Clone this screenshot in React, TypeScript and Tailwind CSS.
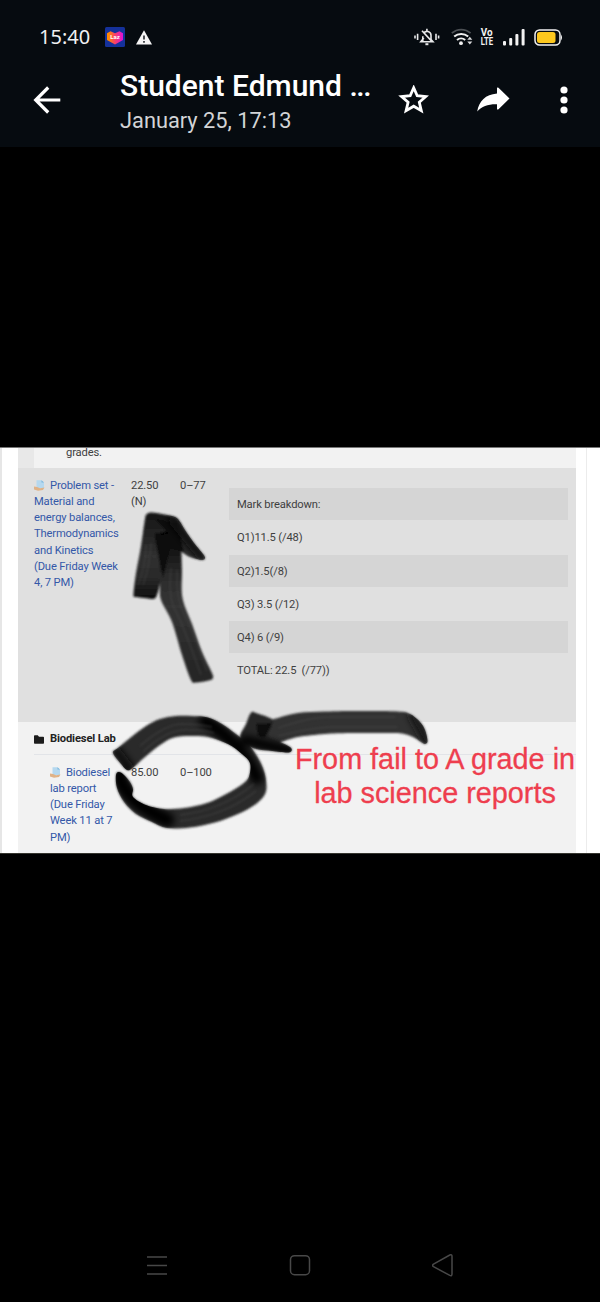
import type { ReactNode } from "react";

const marks = [
  "Mark breakdown:",
  "Q1)11.5 (/48)",
  "Q2)1.5(/8)",
  "Q3) 3.5 (/12)",
  "Q4) 6 (/9)",
  "TOTAL: 22.5  (/77))",
];

type Point = [number, number];

/* Smooth path through a list of points (Catmull-Rom) */
function smooth(points: Point[]) {
  const n = points.length;
  const at = (i: number) => points[(i + n) % n];
  let d = `M${points[0][0]} ${points[0][1]}`;
  for (let i = 0; i < n; i++) {
    const [p0, p1, p2, p3] = [at(i - 1), at(i), at(i + 1), at(i + 2)];
    d += `C${p1[0] + (p2[0] - p0[0]) / 6} ${p1[1] + (p2[1] - p0[1]) / 6} ${p2[0] - (p3[0] - p1[0]) / 6} ${p2[1] - (p3[1] - p1[1]) / 6} ${p2[0]} ${p2[1]}`;
  }
  return d;
}

const head = smooth([
  [133.5, 594], [135, 597], [144, 598], [153, 599], [156, 597], [159, 588], [162, 572], [167, 550], [175, 545], [182, 552],
  [190, 557], [202, 560], [205, 558], [203, 554], [194, 543], [185, 530], [178, 519], [172, 516], [162, 514], [152, 512.5],
  [147, 514], [145, 519], [141, 546], [136, 573],
]);
const shaft = smooth([
  [155, 536], [160, 533], [176, 530], [180, 533], [181, 543], [182, 570], [182.5, 598], [192, 624], [202, 652], [212, 673], [213, 678],
  [209, 680.5], [196, 682.5], [191, 680], [182, 655], [172, 622], [161, 600], [160, 585], [159, 560],
]);
const loop = smooth([
  [113, 753], [118, 748], [130, 738], [146, 726], [160, 719], [176, 716], [192, 716], [208, 717.5], [222, 724], [236, 734], [248, 744],
  [257, 756], [263, 768], [266, 780], [265.5, 793], [256, 804], [238, 814], [215, 822.5], [190, 827.5], [167, 828], [152, 822],
  [136, 814], [124, 802], [117, 788], [116, 775], [119, 772], [124, 775], [130, 782], [133, 789], [133, 797], [146, 805],
  [164, 809], [184, 808], [207, 803], [230, 792], [245, 782], [249.5, 775], [250, 763], [242, 754], [228, 744], [208, 737],
  [190, 736], [174, 737.5], [160, 745], [145, 757], [132, 768.5], [127, 770], [122, 765],
]);
const tail = smooth([
  [264, 724], [278, 718], [298, 713], [325, 711.5], [362, 711], [398, 711.5], [410, 714], [420, 722], [425, 730], [427.5, 741],
  [425, 744], [421, 742], [413, 737], [402, 733.5], [385, 733], [350, 733], [325, 734], [298, 737], [280, 742], [264, 743],
]);
const tip = smooth([
  [252, 712], [256, 713], [270, 718], [272.5, 721], [271, 728], [268, 736], [278, 741], [290, 747], [291.5, 751], [287, 752.5],
  [272, 751], [256, 749], [247, 744], [241, 738], [241, 733], [246, 724], [249, 716],
]);

function StatusBar() {
  return (
    <div className="flex h-[74px] items-center pl-[39px] pr-[37px]">
      <span className="w-[66px] font-['Noto_Sans',sans-serif] text-[20px] leading-none text-[#f0f1f2]">15:40</span>
      <svg width="20" height="20" viewBox="0 0 20 20">
        <defs>
          <linearGradient id="laz">
            <stop offset="0.1" stopColor="#ff8a00" />
            <stop offset="0.5" stopColor="#f9406a" />
            <stop offset="1" stopColor="#e010d8" />
          </linearGradient>
        </defs>
        <rect width="20" height="20" rx="1.5" fill="#15319a" />
        <path d="M2 6.2 5.5 4.2 10 6.2 14.5 4.2 18 6.2V13L10 17.5 2 13Z" fill="url(#laz)" />
        <text x="10" y="12" textAnchor="middle" fontSize="6" textLength="9.5" fontWeight="700" fill="#fff" fontFamily="Roboto, sans-serif">Laz</text>
      </svg>
      <svg className="ml-[11px]" width="16" height="15" viewBox="0 0 16 15">
        <path d="M8 .3 16 14.5H0Z" fill="#f5f5f5" />
        <path d="M8 5.5v4M8 11v1.8" stroke="#060b10" strokeWidth="1.4" />
      </svg>

      <div className="ml-auto flex items-center">
        <svg className="-ml-px mr-px" width="26" height="18" viewBox="0 0 26 18" fill="none" stroke="#e8e9ea" strokeWidth="1.6">
          <path d="M1 7.4v3M3.6 5.7v6.4M22 5.7v6.4M24.6 7.4v3" />
          <path d="M8.8 13V8.2M9.5 5.5a4 4 0 0 1 7.5 2v4l2 2.3H6.8L9.8 10M12.9.8v2.4M8 2.8l9.8 10.6" />
          <path d="M11.4 16.2h3" strokeWidth="2" />
        </svg>
        <svg className="ml-[10px]" width="22" height="18" viewBox="0 0 22 18" fill="none">
          <path d="M.8 5.2a14 14 0 0 1 18.8 0" stroke="#4c5054" strokeWidth="1.8" />
          <path d="M3.2 8.6a10.5 10.5 0 0 1 14 0M6 12a6.4 6.4 0 0 1 8.2 0" stroke="#f0f0f0" strokeWidth="2" />
          <circle cx="10" cy="15.2" r="1.9" fill="#f0f0f0" />
          <path d="m16.3 11.8 2.5-3 2.5 3ZM16.3 13.4l2.5 3 2.5-3Z" fill="#d9dadb" />
        </svg>
        <svg className="ml-[7px]" width="14" height="24" viewBox="0 0 14 24" fill="#f2f2f2" fontFamily="Roboto, sans-serif" fontWeight="700" fontSize="10.5">
          <text x="0.8" y="11.2" textLength="11.8" lengthAdjust="spacingAndGlyphs">Vo</text>
          <text x="0.8" y="20.2" textLength="12.4" lengthAdjust="spacingAndGlyphs">LTE</text>
        </svg>
        <svg className="ml-[9px]" width="22" height="18" viewBox="0 0 22 18" fill="#f2f2f2">
          <rect x="0" y="13" width="3" height="4.5" rx="1" />
          <rect x="6.2" y="10" width="3" height="7.5" rx="1" />
          <rect x="12.4" y="6" width="3" height="11.5" rx="1" />
          <rect x="18.6" y="1" width="3" height="16.5" rx="1" />
        </svg>
        <svg className="ml-[9px]" width="29" height="17" viewBox="0 0 29 17">
          <rect x="1" y="1" width="25" height="15" rx="4.5" fill="none" stroke="#f2f2f2" strokeWidth="1.5" />
          <rect x="3" y="3" width="18.5" height="11" rx="2.5" fill="#fdc81e" />
          <path d="M27 5.5q2 3 0 6Z" fill="#f2f2f2" />
        </svg>
      </div>
    </div>
  );
}

function AppBar() {
  return (
    <div className="flex h-[52px] items-center pl-[33px] pr-[32px] text-white">
      <svg width="28" height="28" viewBox="0 0 28 28" fill="none" stroke="#fff" strokeWidth="3.2">
        <path d="M27.3 14H3M15.2 1.5 2.7 14l12.5 12.5" />
      </svg>
      <div className="ml-[59px] w-[278px] whitespace-nowrap font-['Roboto',sans-serif]">
        <div className="mt-[7px] text-[30px] font-medium leading-[34px]">
          Student Edmund <span className="tracking-[-1.4px]">...</span>
        </div>
        <div className="text-[21.8px] leading-[35px] text-[#d2d4d6]">January 25, 17:13</div>
      </div>
      <svg width="31" height="30" viewBox="0 0 31 30" fill="none" stroke="#fff" strokeWidth="2.8">
        <path d="M15.7 2.8 19.2 10.7 27.8 11.5 21.3 17.2 23.3 25.7 15.7 21.2 8.1 25.7 10.1 17.2 3.6 11.5 12.2 10.7Z" />
      </svg>
      <svg className="ml-[47px]" width="34" height="26" viewBox="0 0 34 26">
        <path d="M21 .8Q21.6 0 22.5.8L33.5 11.5 22.5 22.2Q21.6 23 21 22.2V17.2C12 17 6 19 1.2 24.5 3 14 9.5 7.5 21 6.5Z" fill="#fff" />
      </svg>
      <svg className="ml-auto" width="8" height="28" viewBox="0 0 8 28" fill="#fff">
        <circle cx="4" cy="4" r="3.6" />
        <circle cx="4" cy="14" r="3.6" />
        <circle cx="4" cy="24" r="3.6" />
      </svg>
    </div>
  );
}

function AssignIcon() {
  return (
    <svg className="mr-[5px] inline-block align-[-2px]" width="11" height="11" viewBox="0 0 11 11">
      <path d="M2.5.3h5L10 2.5V8H2.5Z" fill="#b5d8ef" />
      <path d="M7.5.3V2.5H10Z" fill="#7db6dc" />
      <path d="M0 6.5 3 7l3 1.3L10.5 7.5 9 10 4 10.8 0 9.5Z" fill="#dfb287" />
    </svg>
  );
}

function Item({ children }: { children: ReactNode }) {
  return (
    <div className="whitespace-nowrap text-[#3458a8]">
      <AssignIcon />
      {children}
    </div>
  );
}

/* Marker strokes drawn over the gradebook */
function Scribbles() {
  return (
    <svg className="absolute inset-0" width="600" height="405" viewBox="0 448 600 405">
      <defs>
        <filter id="soft" x="-5%" y="-5%" width="110%" height="110%">
          <feGaussianBlur stdDeviation="1" />
        </filter>
        <filter id="shade" x="-20%" y="-20%" width="140%" height="140%">
          <feGaussianBlur stdDeviation="3.5" />
        </filter>
        <linearGradient id="leg" x1="0" y1="0" x2="0" y2="1">
          <stop offset="0" stopColor="#151515" />
          <stop offset="0.5" stopColor="#303030" />
          <stop offset="0.75" stopColor="#2a2a2a" />
          <stop offset="1" stopColor="#0c0c0c" />
        </linearGradient>
        <linearGradient id="shaft" x1="0" y1="0" x2="0" y2="1">
          <stop offset="0" stopColor="#030303" />
          <stop offset="0.3" stopColor="#2b2b2b" />
          <stop offset="0.5" stopColor="#343434" />
          <stop offset="1" stopColor="#242424" />
        </linearGradient>
        <clipPath id="ink">
          <path d={head} />
          <path d={shaft} />
          <path d={loop} />
          <path d={tail} />
          <path d={tip} />
        </clipPath>
      </defs>

      <g filter="url(#soft)">
        <path d={head} fill="url(#leg)" />
        <path d={shaft} fill="url(#shaft)" />
        <path d={loop} fill="#292929" />
        <path d={tail} fill="#303030" />
        <path d={tip} fill="#262626" />
        <path d="M155 519 177 523 184 552 170 548 163 578 155 537 168 533Z" fill="#080808" />
        <path d="M256 724 272 723 265 738 258 736Z" fill="#0b0b0b" />
      </g>

      <g clipPath="url(#ink)">
        <g filter="url(#shade)" fill="none" strokeLinecap="round">
          <path d="M172 520 188 540 202 557" stroke="#080808" strokeWidth="9" />
          <path d="M116 751 130 769" stroke="#080808" strokeWidth="10" />
          <path d="M119 775Q124 800 167 820" stroke="#060606" strokeWidth="15" />
          <path d="M205 721Q240 742 257 778" stroke="#060606" strokeWidth="13" />
          <path d="M413 715 428 742" stroke="#161616" strokeWidth="9" />
          <path d="M245 740 291 751" stroke="#030303" strokeWidth="9" />
        </g>
        <g filter="url(#soft)" fill="none" stroke="#4a4a4a" strokeWidth="1.8" opacity="0.4">
          <path d="M151 543Q150 565 143 585M146 545Q146 565 138 585" />
          <path d="M171 568Q168 598 175 610T201 675M177 570Q176 598 184 613T207 671" />
          <path d="M140 746Q165 724 182 724T212 727M143 752Q165 731 184 730T214 733" />
          <path d="M180 821Q225 816 256 791M180 815Q222 810 254 784" />
          <path d="M278 728Q310 717 330 717H396M278 736Q310 728 330 727H398" />
        </g>
      </g>
    </svg>
  );
}

function Gradebook() {
  return (
    <div className="relative h-[405px] overflow-hidden bg-white pl-[18px] pr-[24px] font-['Roboto',sans-serif] text-[11.2px] leading-[16.25px] tracking-[-0.15px] text-[#3f3f3f]">
      <div className="flex h-[20px] bg-[#e8e8e8] pl-4">
        <div className="h-full flex-1 bg-[#f2f2f2] pl-8">
          <div className="-mt-[3px]">grades.</div>
        </div>
      </div>

      <div className="flex h-[254px] bg-[#e0e0e0] pl-4">
        <div className="w-[97px] pt-[9.6px]">
          <Item>
            Problem set -<br />Material and<br />energy balances,<br />Thermodynamics<br />and Kinetics<br />
            (Due Friday Week<br />4, 7 PM)
          </Item>
        </div>
        <div className="w-[49px] pt-[9.6px]">22.50<br />(N)</div>
        <div className="w-[49px] pt-[9.6px]">0–77</div>
        <div className="mr-2 flex-1 pt-5">
          {marks.map((mark, i) => (
            <div key={mark} className="h-[33.25px] whitespace-pre pb-px">
              <div className={i % 2 === 0 ? "h-full bg-[#d5d5d5] pl-2 leading-[33.5px]" : "h-full pl-2 leading-[33.5px]"}>
                {mark}
              </div>
            </div>
          ))}
        </div>
      </div>

      <div className="h-[131px] bg-[#f2f2f2] pl-4">
        <div className="flex h-[33px] items-center border-b border-[#e2e4e8] pt-[2px] font-bold text-[#222]">
          <svg className="mr-[6px]" width="10" height="9" viewBox="0 0 10 9" fill="#1c1c1c">
            <path d="M0 1Q0 .3.8.3h3L5 1.7h4.2Q10 1.7 10 2.5V8Q10 8.8 9.2 8.8H.8Q0 8.8 0 8Z" />
          </svg>
          Biodiesel Lab
        </div>
        <div className="flex pt-[9.6px]">
          <div className="w-[97px] pl-4">
            <Item>
              Biodiesel<br />lab report<br />(Due Friday<br />Week 11 at 7<br />PM)
            </Item>
          </div>
          <div className="w-[49px]">85.00</div>
          <div>0–100</div>
        </div>
      </div>

      {/* page edges */}
      <div className="absolute inset-y-0 left-0 w-[2px] bg-[#e6e6e6]" />
      <div className="absolute inset-y-0 right-[13px] w-px bg-[#ececec]" />

      <Scribbles />

      <div className="absolute left-[290px] top-[295px] w-[290px] whitespace-nowrap text-center font-['Liberation_Sans',Arial,sans-serif] text-[28.8px] leading-[33.5px] tracking-normal text-[#ee3e4e] [-webkit-text-stroke:0.3px_#ee3e4e]">
        From fail to A grade in<br />lab science reports
      </div>
    </div>
  );
}

function NavBar() {
  return (
    <div className="flex h-[74px] justify-between px-[146px]">
      <svg width="22" height="74" viewBox="0 0 22 74" stroke="#484848" strokeWidth="1.5">
        <path d="M1 29h20M1 37.5h20M1 46h20" />
      </svg>
      <svg width="22" height="74" viewBox="0 0 22 74" fill="none" stroke="#484848" strokeWidth="1.5">
        <rect x="1.5" y="27.7" width="19" height="19" rx="4" />
      </svg>
      <svg width="22" height="74" viewBox="0 0 22 74" fill="none" stroke="#484848" strokeWidth="1.5">
        <path d="M1.5 36.2 17.8 27Q20 26.2 20 28.5V46Q20 48.3 17.8 47.4L1.5 38.7Q-.3 37.5 1.5 36.2Z" />
      </svg>
    </div>
  );
}

export default function App() {
  return (
    <div className="flex h-[1302px] w-[600px] flex-col overflow-hidden bg-black">
      <header className="h-[147px] bg-[#060b10]">
        <StatusBar />
        <AppBar />
      </header>
      <main className="flex flex-1 flex-col pt-[300px]">
        <div className="h-px bg-[#777]" />
        <Gradebook />
        <div className="h-px bg-[#35352f]" />
      </main>
      <NavBar />
    </div>
  );
}
